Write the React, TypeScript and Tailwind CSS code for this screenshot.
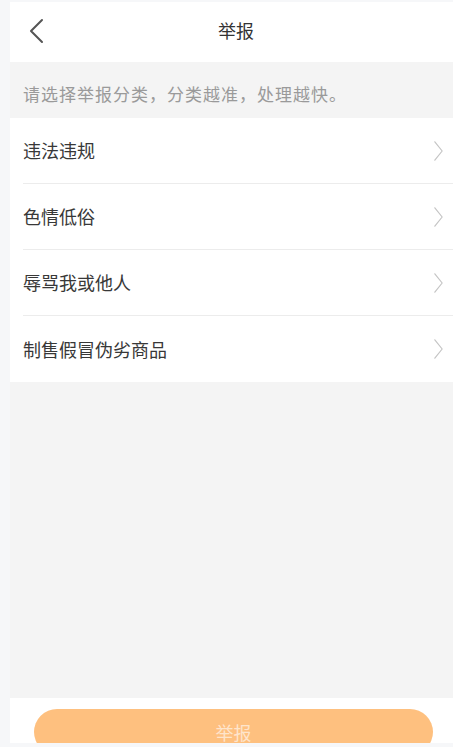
import React from 'react';

const reasons = ['违法违规', '色情低俗', '辱骂我或他人', '制售假冒伪劣商品'];

function Chevron({ className }: { className?: string }) {
  return (
    <svg viewBox="0 0 12 24" className={className} fill="none" stroke="currentColor" strokeWidth="1.3" strokeLinecap="round" strokeLinejoin="round">
      <path d="M2 2 L10 12 L2 22" />
    </svg>
  );
}

export default function App() {
  return (
    <div
      className="w-[453px] h-[747px] bg-[#f6f7f9] pl-[10px] pt-[2px] pb-[4px] flex flex-col overflow-hidden"
      style={{ fontFamily: '"Noto Sans CJK SC", "Noto Sans", sans-serif' }}
    >
      <div className="flex-1 flex flex-col bg-[#f4f4f4] overflow-hidden">
        {/* Header */}
        <div className="h-[60px] shrink-0 bg-white relative flex items-center justify-center pl-[9px] pb-[4px]">
          <svg viewBox="0 0 16 26" className="absolute left-[18px] top-[16px] w-[16px] h-[26px] text-[#555]" fill="none" stroke="currentColor" strokeWidth="2" strokeLinecap="round" strokeLinejoin="round">
            <path d="M14 2 L3 13 L14 24" />
          </svg>
          <span className="text-[18px] text-[#333]">举报</span>
        </div>

        {/* Hint */}
        <div className="h-[56px] shrink-0 flex items-center px-[13px] pt-[8px]">
          <span className="text-[17px] text-[#9a9a9a] tracking-[1px]">请选择举报分类，分类越准，处理越快。</span>
        </div>

        {/* List */}
        <div className="bg-white shrink-0">
          {reasons.map((r, i) => (
            <div key={r} className="pl-[13px]">
              <div className={`h-[66px] flex items-center justify-between pr-[9px] ${i < reasons.length - 1 ? 'border-b border-[#ececec]' : ''}`}>
                <span className="text-[18px] text-[#383838]">{r}</span>
                <Chevron className="w-[11px] h-[22px] text-[#c4c4c4]" />
              </div>
            </div>
          ))}
        </div>

        <div className="flex-1" />

        {/* Bottom */}
        <div className="h-[45px] shrink-0 bg-white pt-[11px] overflow-hidden">
          <div className="ml-[24px] w-[399px] h-[46px] rounded-full bg-[#fec07f] flex items-center justify-center">
            <span className="text-[18px] text-white/60">举报</span>
          </div>
        </div>
      </div>
    </div>
  );
}
